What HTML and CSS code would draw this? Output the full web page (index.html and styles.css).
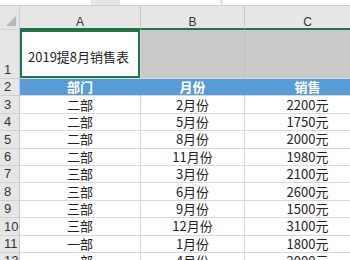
FILE: index.html
```html
<!DOCTYPE html>
<html lang="zh">
<head>
  <meta charset="UTF-8" />
  <title>销售表</title>
  <link rel="stylesheet" href="styles.css">
</head>
<body>
  <div class="topbar">
    <div class="tab t1"></div>
    <div class="tab t2"></div>
    <div class="tab t3"></div>
  </div>

  <div class="sheet">
    <!-- column headers -->
    <div class="corner"><span class="tri"></span></div>
    <div class="colhead">A</div>
    <div class="colhead">B</div>
    <div class="colhead">C</div>

    <!-- row 1 -->
    <div class="rowhead r1">1</div>
    <div class="cell title">2019提8月销售表</div>
    <div class="cell grey"></div>
    <div class="cell grey"></div>

    <!-- row 2 -->
    <div class="rowhead">2</div>
    <div class="cell th">部门</div>
    <div class="cell th">月份</div>
    <div class="cell th">销售</div>

    <div class="rowhead">3</div><div class="cell">二部</div><div class="cell">2月份</div><div class="cell">2200元</div>
    <div class="rowhead">4</div><div class="cell">二部</div><div class="cell">5月份</div><div class="cell">1750元</div>
    <div class="rowhead">5</div><div class="cell">二部</div><div class="cell">8月份</div><div class="cell">2000元</div>
    <div class="rowhead">6</div><div class="cell">二部</div><div class="cell">11月份</div><div class="cell">1980元</div>
    <div class="rowhead">7</div><div class="cell">三部</div><div class="cell">3月份</div><div class="cell">2100元</div>
    <div class="rowhead">8</div><div class="cell">三部</div><div class="cell">6月份</div><div class="cell">2600元</div>
    <div class="rowhead">9</div><div class="cell">三部</div><div class="cell">9月份</div><div class="cell">1500元</div>
    <div class="rowhead">10</div><div class="cell">三部</div><div class="cell">12月份</div><div class="cell">3100元</div>
    <div class="rowhead">11</div><div class="cell">一部</div><div class="cell">1月份</div><div class="cell">1800元</div>
    <div class="rowhead">12</div><div class="cell">一部</div><div class="cell">4月份</div><div class="cell">2000元</div>
  </div>
</body>
</html>
```

FILE: styles.css
```css
* { margin: 0; padding: 0; box-sizing: border-box; }
body {
  font-family: "Noto Sans CJK SC", "Noto Sans", sans-serif;
  background: #fff;
  color: #222;
  overflow: hidden;
  width: 350px; height: 260px;
}

/* strip of the ribbon above the sheet */
.topbar {
  height: 6px;
  background: #e6e6e6;
  display: flex;
  border-bottom: 1px solid #d0d0d0;
}
.tab { background: #fff; height: 5px; }
.t1 { width: 91px; }
.t2 { width: 100px; margin-left: 29px; }
.t3 { flex: 1; margin-left: 3px; }

.sheet {
  display: grid;
  grid-template-columns: 20px 121px 104px 126px;
  grid-template-rows: 24px 49px repeat(11, 17.4px);
  width: 371px;
}

.corner, .colhead, .rowhead {
  background: #e6e6e6;
  color: #333;
  font-family: "Liberation Sans", "Noto Sans", sans-serif;
  font-size: 12px;
}
.corner {
  position: relative;
  border-right: 1px solid #d0d0d0;
  border-bottom: 1px solid #d0d0d0;
}
.tri {
  position: absolute;
  right: 3px; bottom: 3px;
  width: 0; height: 0;
  border-left: 10px solid transparent;
  border-bottom: 10px solid #b8b8b8;
}
.colhead {
  display: flex; align-items: center; justify-content: center;
  padding-top: 9px;
  border-right: 1px solid #c8c8c8;
  border-bottom: 2px solid #217346;
}
.rowhead {
  display: flex; align-items: flex-end; justify-content: flex-start;
  padding-left: 4px;
  font-size: 13px;
  line-height: 16px;
  border-right: 1px solid #c8c8c8;
  border-bottom: 1px solid #d0d0d0;
}

.cell {
  display: flex; align-items: center; justify-content: center;
  font-size: 13px;
  line-height: 16px;
  white-space: nowrap;
  border-right: 1px solid #d9d9d9;
  border-bottom: 1px solid #d9d9d9;
}
.cell.title {
  justify-content: flex-start;
  padding-left: 8px;
  padding-top: 6px;
  font-size: 13px;
  box-shadow: inset 0 0 0 2px #217346;
}
.cell.grey { background: #c9c9c9; border-right-color: #bdbdbd; }
.cell.th {
  background: #5b9bd5;
  color: #fff;
  font-weight: bold;
  border-right-color: #5b9bd5;
  border-bottom-color: #d9d9d9;
}
```
